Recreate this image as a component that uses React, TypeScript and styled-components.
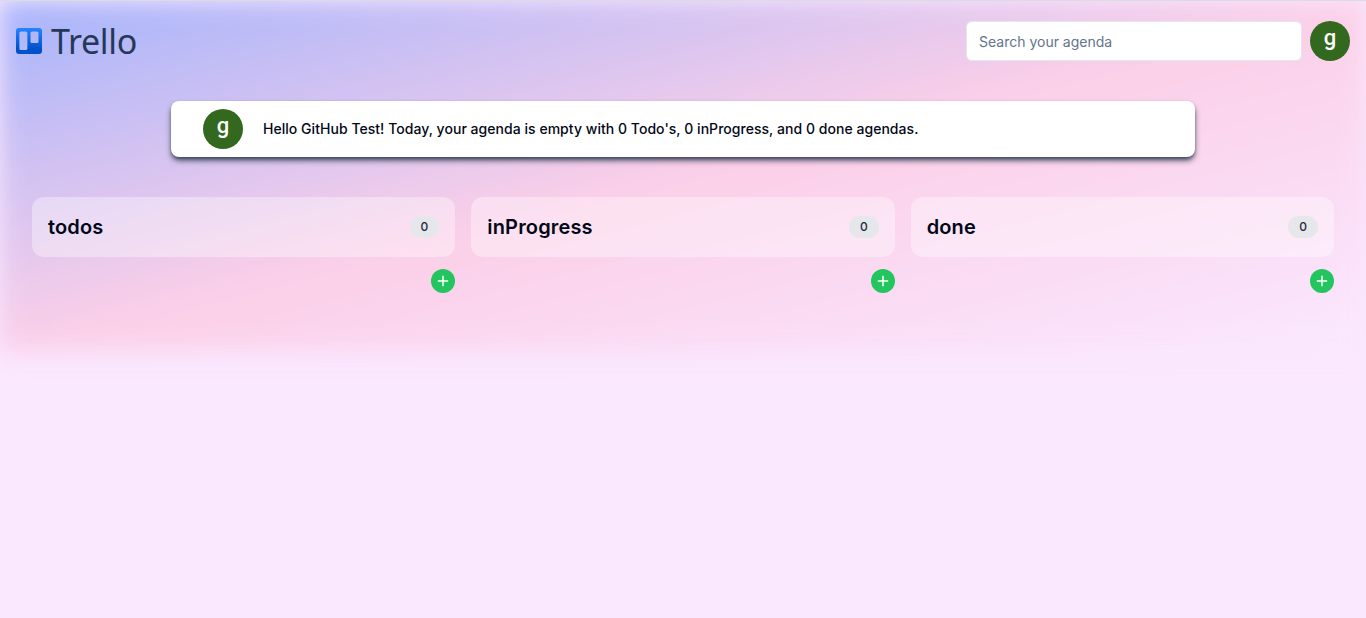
import React from 'react';
import styled, { createGlobalStyle } from 'styled-components';

const GlobalStyle = createGlobalStyle`
  *, *::before, *::after { box-sizing: border-box; }
  body {
    margin: 0;
    background: #fae8ff;
    font-family: Inter, sans-serif;
    color: #020817;
    overflow: hidden;
  }
  h2, p { margin: 0; }
`;

const Page = styled.main`
  position: relative;
  min-height: 618px;
  border-top: 1px solid #d9dce0;
  overflow: hidden;
`;

const Glow = styled.div`
  position: absolute;
  inset: 0 0 auto;
  height: 350px;
  background: linear-gradient(to bottom right, #a5b4fc, #fbcfe8, #fae8ff);
  filter: blur(12px);
`;

const Content = styled.div`
  position: relative;
`;

const Header = styled.header`
  display: flex;
  align-items: center;
  justify-content: space-between;
  height: 80px;
  padding: 0 16px;
`;

const Brand = styled.div`
  display: flex;
  align-items: center;
  gap: 9px;
  color: #253858;
`;

const Wordmark = styled.span`
  font: 400 34px/40px "Noto Sans", sans-serif;
  letter-spacing: -0.3px;
`;

const Tools = styled.div`
  display: flex;
  align-items: center;
  gap: 8px;
`;

const Search = styled.input`
  width: 336px;
  height: 40px;
  padding: 8px 12px;
  border: 1px solid #e2e8f0;
  border-radius: 6px;
  background: #fff;
  font: 400 14px/20px Inter, sans-serif;
  outline: none;
  &::placeholder { color: #64748b; opacity: 1; }
`;

const Avatar = styled.span`
  display: flex;
  flex: none;
  justify-content: center;
  width: 40px;
  height: 40px;
  border-radius: 50%;
  background: #33691e;
  color: #fff;
  font: 500 22px/34px Roboto, sans-serif;
`;

const Banner = styled.section`
  display: flex;
  align-items: center;
  gap: 20px;
  width: 1024px;
  height: 56px;
  margin: 20px auto 0;
  padding: 0 32px;
  border-radius: 8px;
  background: #fff;
  box-shadow: 0 4px 6px -1px #334155, 0 2px 4px -2px #334155;
`;

const Greeting = styled.p`
  font-size: 14px;
  line-height: 20px;
  font-weight: 500;
  letter-spacing: 0.037px;
`;

const Board = styled.section`
  display: grid;
  grid-template-columns: repeat(3, 1fr);
  gap: 16px;
  padding: 40px 32px 0;
`;

const Column = styled.div`
  display: flex;
  flex-direction: column;
  align-items: flex-end;
  gap: 12px;
`;

const ColumnHead = styled.div`
  display: flex;
  align-items: center;
  justify-content: space-between;
  width: 100%;
  height: 60px;
  padding: 0 16px;
  border-radius: 12px;
  background: rgba(255, 255, 255, 0.36);
`;

const Title = styled.h2`
  font-size: 20px;
  line-height: 28px;
  font-weight: 600;
  letter-spacing: 0.15px;
`;

const Count = styled.span`
  padding: 3px 11px;
  border-radius: 11px;
  background: #e5e7eb;
  font-size: 12px;
  line-height: 16px;
  font-weight: 500;
  color: #1e293b;
`;

const AddButton = styled.button`
  display: grid;
  place-items: center;
  width: 24px;
  height: 24px;
  padding: 0;
  border: 0;
  border-radius: 50%;
  background: #22c55e;
  color: #fff;
`;

const columns = [
  { name: 'todos', count: 0 },
  { name: 'inProgress', count: 0 },
  { name: 'done', count: 0 },
];

function TrelloMark() {
  return (
    <svg width="26" height="26" viewBox="0 0 26 26">
      <defs>
        <linearGradient id="mark" x1="0" y1="0" x2="0" y2="1">
          <stop offset="0" stopColor="#2684ff" />
          <stop offset="0.8" stopColor="#0052cc" />
        </linearGradient>
        <mask id="cards">
          <rect width="26" height="26" rx="3" fill="#fff" />
          <rect x="3.4" y="3.6" width="8" height="18.4" rx="1.5" fill="#000" />
          <rect x="14.5" y="3.6" width="8" height="11.3" rx="1.5" fill="#000" />
        </mask>
      </defs>
      <rect width="26" height="26" fill="url(#mark)" mask="url(#cards)" />
    </svg>
  );
}

export default function App() {
  return (
    <Page>
      <GlobalStyle />
      <Glow />
      <Content>
        <Header>
          <Brand>
            <TrelloMark />
            <Wordmark>Trello</Wordmark>
          </Brand>
          <Tools>
            <Search placeholder="Search your agenda" />
            <Avatar>g</Avatar>
          </Tools>
        </Header>
        <Banner>
          <Avatar>g</Avatar>
          <Greeting>
            Hello GitHub Test! Today, your agenda is empty with 0 Todo's, 0 inProgress, and 0 done agendas.
          </Greeting>
        </Banner>
        <Board>
          {columns.map((column) => (
            <Column key={column.name}>
              <ColumnHead>
                <Title>{column.name}</Title>
                <Count>{column.count}</Count>
              </ColumnHead>
              <AddButton aria-label={`Add to ${column.name}`}>
                <svg width="12" height="12" viewBox="0 0 12 12" stroke="currentColor" strokeWidth="1.5">
                  <path d="M6 .8v10.4M.8 6h10.4" />
                </svg>
              </AddButton>
            </Column>
          ))}
        </Board>
      </Content>
    </Page>
  );
}
